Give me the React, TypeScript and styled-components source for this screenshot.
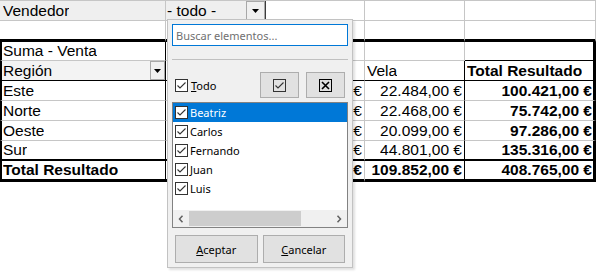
import React from "react";
import styled, { createGlobalStyle } from "styled-components";

const Global = createGlobalStyle`
  html, body { margin: 0; padding: 0; background: #ffffff; }
  body { width: 596px; height: 272px; overflow: hidden; font-family: "Liberation Sans", Arial, sans-serif; }
`;

const GRID = "1px solid #c6c6c6";
const BLK = "1px solid #000000";
const LEFT = "2px solid #000000";
const THICK = "2px solid #000000";
const HEAVY = "3px solid #000000";

const Page = styled.div`
  position: relative;
  width: 596px;
  height: 272px;
  overflow: hidden;
  background: #ffffff;
`;

const Sheet = styled.div`
  display: flex;
  flex-direction: column;
  border-top: ${GRID};
`;

const Row = styled.div<{ $h: number }>`
  display: grid;
  grid-template-columns: 166px 100px 99px 100px 131px;
  height: ${(p) => p.$h}px;
`;

const Cell = styled.div<{
  $r?: string;
  $b?: string;
  $l?: string;
  $bg?: string;
  $right?: boolean;
  $bold?: boolean;
  $pl?: number;
  $pr?: number;
}>`
  box-sizing: border-box;
  display: flex;
  align-items: flex-end;
  justify-content: ${(p) => (p.$right ? "flex-end" : "flex-start")};
  min-width: 0;
  overflow: hidden;
  white-space: nowrap;
  font-family: "Liberation Sans", Arial, sans-serif;
  font-size: 15.5px;
  line-height: 18px;
  color: #000000;
  font-weight: ${(p) => (p.$bold ? 700 : 400)};
  background: ${(p) => p.$bg ?? "#ffffff"};
  border-right: ${(p) => p.$r ?? GRID};
  border-bottom: ${(p) => p.$b ?? GRID};
  border-left: ${(p) => p.$l ?? "none"};
  padding: 0 ${(p) => p.$pr ?? 2}px 0 ${(p) => p.$pl ?? 2}px;
`;

const CellText = styled.span`
  flex: 0 1 auto;
  overflow: hidden;
`;

const FieldButton = styled.div<{ $w: number }>`
  box-sizing: border-box;
  margin-left: auto;
  align-self: stretch;
  width: ${(p) => p.$w}px;
  flex: 0 0 auto;
  display: flex;
  align-items: center;
  justify-content: center;
  background: #f0f0f0;
  border: 1px solid #a8a8a8;
`;

const DownTriangle = () => (
  <svg width="7" height="4" viewBox="0 0 7 4">
    <path d="M0 0H7L3.5 4Z" fill="#000" />
  </svg>
);

/* ---------- popup ---------- */

const Popup = styled.div`
  position: absolute;
  left: 167px;
  top: 19px;
  width: 186px;
  height: 249px;
  box-sizing: border-box;
  background: #f0f0f0;
  border: 1px solid #c2c2c2;
  box-shadow: 2px 2px 2px rgba(0, 0, 0, 0.12);
  padding: 4px 4px 0 4px;
  display: flex;
  flex-direction: column;
  font-family: "Noto Sans", "Open Sans", sans-serif;
  font-size: 11px;
  color: #000000;
`;

const SearchInput = styled.input`
  box-sizing: border-box;
  width: 100%;
  height: 22px;
  margin: 0;
  border: 1px solid #0078d7;
  background: #ffffff;
  padding: 0 3px;
  font-family: "Noto Sans", "Open Sans", sans-serif;
  font-size: 11px;
  color: #000;
  outline: none;
  &::placeholder {
    color: #707070;
    opacity: 1;
  }
`;

const Separator = styled.div`
  height: 1px;
  margin-top: 13px;
  background: #c0c0c0;
`;

const TodoRow = styled.div`
  display: flex;
  align-items: center;
  height: 26px;
  margin-top: 12px;
  padding: 0 3px;
  gap: 3px;
`;

const Mnemonic = styled.span`
  text-decoration: underline;
`;

const IconButtons = styled.div`
  margin-left: auto;
  display: flex;
  gap: 7px;
`;

const IconButton = styled.div`
  box-sizing: border-box;
  width: 39px;
  height: 26px;
  display: flex;
  align-items: center;
  justify-content: center;
  background: #e1e1e1;
  border: 1px solid #adadad;
`;

const ListBox = styled.div`
  box-sizing: border-box;
  height: 126px;
  margin-top: 4px;
  border: 1px solid #828282;
  background: #ffffff;
  display: flex;
  flex-direction: column;
`;

const Items = styled.div`
  flex: 1;
  display: flex;
  flex-direction: column;
`;

const Item = styled.div<{ $sel?: boolean }>`
  height: 19px;
  display: flex;
  align-items: center;
  gap: 2px;
  padding-left: 2px;
  background: ${(p) => (p.$sel ? "#0078d7" : "transparent")};
  color: ${(p) => (p.$sel ? "#ffffff" : "#000000")};
`;

const HScroll = styled.div`
  height: 17px;
  display: flex;
  align-items: center;
  background: #f0f0f0;
`;

const ScrollArrow = styled.div`
  width: 16px;
  height: 17px;
  display: flex;
  align-items: center;
  justify-content: center;
  flex: 0 0 auto;
`;

const ScrollTrack = styled.div`
  flex: 1;
  height: 15px;
  display: flex;
`;

const ScrollThumb = styled.div`
  width: 112px;
  height: 15px;
  background: #cdcdcd;
`;

const Footer = styled.div`
  display: flex;
  gap: 5px;
  margin-top: 7px;
  padding: 0 3px;
`;

const PushButton = styled.div`
  box-sizing: border-box;
  flex: 1;
  height: 28px;
  display: flex;
  align-items: center;
  justify-content: center;
  background: #e1e1e1;
  border: 1px solid #adadad;
`;

const CheckGlyph = ({ fill = "#ffffff", stroke = "#333333" }: { fill?: string; stroke?: string }) => (
  <svg width="13" height="13" viewBox="0 0 13 13" style={{ flex: "0 0 auto" }}>
    <rect x="0.5" y="0.5" width="12" height="12" fill={fill} stroke={stroke} />
    <polyline points="2.5,6.5 5,9 10.5,3.5" fill="none" stroke={stroke} strokeWidth="1.1" />
  </svg>
);

const CloseGlyph = () => (
  <svg width="13" height="13" viewBox="0 0 13 13">
    <rect x="0.5" y="0.5" width="12" height="12" fill="none" stroke="#000" />
    <path d="M3 3L10 10M10 3L3 10" stroke="#000" strokeWidth="1.6" />
  </svg>
);

const Chevron = ({ dir }: { dir: "l" | "r" }) => (
  <svg width="6" height="8" viewBox="0 0 6 8">
    <path
      d={dir === "l" ? "M4.5 0.8L1.5 4L4.5 7.2" : "M1.5 0.8L4.5 4L1.5 7.2"}
      fill="none"
      stroke="#606060"
      strokeWidth="1.5"
    />
  </svg>
);

const rows = [
  { name: "Este", c: "37.727,00 €", d: "22.484,00 €", e: "100.421,00 €" },
  { name: "Norte", c: "25.124,00 €", d: "22.468,00 €", e: "75.742,00 €" },
  { name: "Oeste", c: "37.684,00 €", d: "20.099,00 €", e: "97.286,00 €" },
  { name: "Sur", c: "43.195,00 €", d: "44.801,00 €", e: "135.316,00 €" },
];

const sellers = ["Beatriz", "Carlos", "Fernando", "Juan", "Luis"];

export default function App() {
  return (
    <Page>
      <Global />
      <Sheet>
        <Row $h={20}>
          <Cell $bg="#efefef" $pl={3}>
            <CellText>Vendedor</CellText>
          </Cell>
          <Cell $bg="#efefef" $pl={1} $pr={0} $r="1px solid #3c3c3c">
            <CellText>- todo -</CellText>
            <FieldButton $w={19}>
              <DownTriangle />
            </FieldButton>
          </Cell>
          <Cell />
          <Cell />
          <Cell />
        </Row>
        <Row $h={21}>
          <Cell $b={HEAVY} />
          <Cell $b={HEAVY} />
          <Cell $b={HEAVY} />
          <Cell $b={HEAVY} />
          <Cell $b={HEAVY} />
        </Row>
        <Row $h={19}>
          <Cell $l={LEFT} $r={BLK} $pl={1}>
            <CellText>Suma - Venta</CellText>
          </Cell>
          <Cell />
          <Cell />
          <Cell />
          <Cell $r={HEAVY} $b={BLK} />
        </Row>
        <Row $h={20}>
          <Cell $l={LEFT} $r={BLK} $b={BLK} $bg="#f3f3f3" $pl={1} $pr={0}>
            <CellText>Región</CellText>
            <FieldButton $w={15}>
              <DownTriangle />
            </FieldButton>
          </Cell>
          <Cell $b={BLK} />
          <Cell $b={BLK} />
          <Cell $b={BLK} $r={BLK}>
            <CellText>Vela</CellText>
          </Cell>
          <Cell $b={BLK} $r={HEAVY} $bold>
            <CellText>Total Resultado</CellText>
          </Cell>
        </Row>
        {rows.map((r, i) => {
          const last = i === rows.length - 1;
          const b = last ? THICK : GRID;
          return (
            <Row $h={20} key={r.name}>
              <Cell $l={LEFT} $r={BLK} $b={b} $pl={1}>
                <CellText>{r.name}</CellText>
              </Cell>
              <Cell $b={b} />
              <Cell $b={b} $right>
                <CellText>{r.c}</CellText>
              </Cell>
              <Cell $b={b} $r={BLK} $right>
                <CellText>{r.d}</CellText>
              </Cell>
              <Cell $b={b} $r={HEAVY} $right $bold $pr={1}>
                <CellText>{r.e}</CellText>
              </Cell>
            </Row>
          );
        })}
        <Row $h={21}>
          <Cell $l={LEFT} $r={BLK} $b={HEAVY} $bold $pl={1}>
            <CellText>Total Resultado</CellText>
          </Cell>
          <Cell $b={HEAVY} />
          <Cell $b={HEAVY} $right $bold>
            <CellText>143.730,00 €</CellText>
          </Cell>
          <Cell $b={HEAVY} $r={BLK} $right $bold>
            <CellText>109.852,00 €</CellText>
          </Cell>
          <Cell $b={HEAVY} $r={HEAVY} $right $bold $pr={1}>
            <CellText>408.765,00 €</CellText>
          </Cell>
        </Row>
      </Sheet>

      <Popup>
        <SearchInput placeholder="Buscar elementos..." readOnly />
        <Separator />
        <TodoRow>
          <CheckGlyph />
          <span>
            <Mnemonic>T</Mnemonic>odo
          </span>
          <IconButtons>
            <IconButton>
              <CheckGlyph fill="none" stroke="#333333" />
            </IconButton>
            <IconButton>
              <CloseGlyph />
            </IconButton>
          </IconButtons>
        </TodoRow>
        <ListBox>
          <Items>
            {sellers.map((s, i) => (
              <Item key={s} $sel={i === 0}>
                <CheckGlyph />
                <span>{s}</span>
              </Item>
            ))}
          </Items>
          <HScroll>
            <ScrollArrow>
              <Chevron dir="l" />
            </ScrollArrow>
            <ScrollTrack>
              <ScrollThumb />
            </ScrollTrack>
            <ScrollArrow>
              <Chevron dir="r" />
            </ScrollArrow>
          </HScroll>
        </ListBox>
        <Footer>
          <PushButton>
            <span>
              <Mnemonic>A</Mnemonic>ceptar
            </span>
          </PushButton>
          <PushButton>
            <span>
              <Mnemonic>C</Mnemonic>ancelar
            </span>
          </PushButton>
        </Footer>
      </Popup>
    </Page>
  );
}
